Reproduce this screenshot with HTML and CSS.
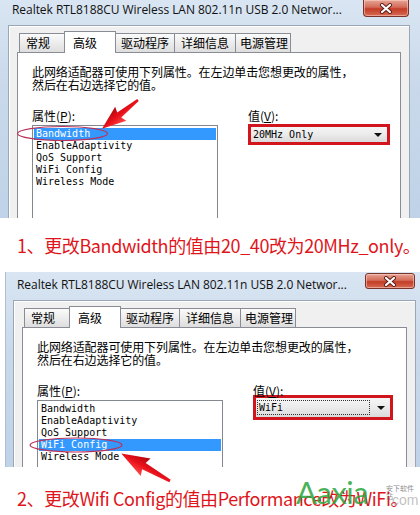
FILE: index.html
```html
<!DOCTYPE html>
<html lang="zh-CN">
<head>
<meta charset="utf-8">
<title>更改无线网卡属性</title>
<link rel="stylesheet" href="styles.css">
</head>
<body>
<div class="page">
  <section class="shot shot--one">
    <div class="titlebar">
      <span class="title">Realtek RTL8188CU Wireless LAN 802.11n USB 2.0 Networ...</span>
      <span class="close"><svg width="14" height="11" viewBox="0 0 14 11"><path d="M3 2 L11 9 M11 2 L3 9" stroke="#5a1a14" stroke-width="4" stroke-linecap="round"/><path d="M3 2 L11 9 M11 2 L3 9" stroke="#fff" stroke-width="2.2" stroke-linecap="round"/></svg></span>
    </div>
    <div class="dialog">
      <div class="tabs">
        <span class="tab tab--general">常规</span>
        <span class="tab tab--active">高级</span>
        <span class="tab tab--driver">驱动程序</span>
        <span class="tab tab--detail">详细信息</span>
        <span class="tab tab--power">电源管理</span>
      </div>
      <div class="panel">
        <p class="desc">此网络适配器可使用下列属性。在左边单击您想更改的属性，<br>然后在右边选择它的值。</p>
        <div class="props">
          <div class="col col--left">
            <div class="label">属性(<u>P</u>):</div>
            <ul class="list">
              <li class="item item--sel">Bandwidth</li>
              <li class="item">EnableAdaptivity</li>
              <li class="item">QoS Support</li>
              <li class="item">WiFi Config</li>
              <li class="item">Wireless Mode</li>
            </ul>
          </div>
          <div class="col col--right">
            <div class="label">值(<u>V</u>):</div>
            <div class="mark">
              <div class="combo"><span class="combo-text">20MHz Only</span><span class="combo-arrow"></span></div>
            </div>
          </div>
        </div>
      </div>
    </div>
  </section>

  <p class="caption caption--one">1、更改Bandwidth的值由20_40改为20MHz_only。</p>

  <section class="shot shot--two">
    <div class="titlebar">
      <span class="title">Realtek RTL8188CU Wireless LAN 802.11n USB 2.0 Networ...</span>
      <span class="close"><svg width="14" height="11" viewBox="0 0 14 11"><path d="M3 2 L11 9 M11 2 L3 9" stroke="#5a1a14" stroke-width="4" stroke-linecap="round"/><path d="M3 2 L11 9 M11 2 L3 9" stroke="#fff" stroke-width="2.2" stroke-linecap="round"/></svg></span>
    </div>
    <div class="dialog">
      <div class="tabs">
        <span class="tab tab--general">常规</span>
        <span class="tab tab--active">高级</span>
        <span class="tab tab--driver">驱动程序</span>
        <span class="tab tab--detail">详细信息</span>
        <span class="tab tab--power">电源管理</span>
      </div>
      <div class="panel">
        <p class="desc">此网络适配器可使用下列属性。在左边单击您想更改的属性，<br>然后在右边选择它的值。</p>
        <div class="props">
          <div class="col col--left">
            <div class="label">属性(<u>P</u>):</div>
            <ul class="list">
              <li class="item">Bandwidth</li>
              <li class="item">EnableAdaptivity</li>
              <li class="item">QoS Support</li>
              <li class="item item--sel">WiFi Config</li>
              <li class="item">Wireless Mode</li>
            </ul>
          </div>
          <div class="col col--right">
            <div class="label">值(<u>V</u>):</div>
            <div class="mark mark--tall">
              <div class="combo"><span class="combo-text combo-text--focus">WiFi</span><span class="combo-arrow"></span></div>
            </div>
          </div>
        </div>
      </div>
    </div>
  </section>

  <p class="caption caption--two">2、更改Wifi Config的值由Performance改为WiFi。</p>

  <div class="watermark">
    <span class="wm-logo">Aaxia</span>
    <span class="wm-site">安下软件站</span>
    <span class="wm-com">com</span>
  </div>

  <svg class="overlay" width="420" height="515" viewBox="0 0 420 515">
    <defs>
      <linearGradient id="arr" x1="0" y1="0" x2="0" y2="1">
        <stop offset="0" stop-color="#ff4a4a"/>
        <stop offset="0.5" stop-color="#e8101a"/>
        <stop offset="1" stop-color="#b0060c"/>
      </linearGradient>
    </defs>
    <ellipse cx="62.5" cy="133.5" rx="45" ry="7" fill="none" stroke="#b8325a" stroke-width="1.2"/>
    <g transform="translate(138 100) rotate(141.5)">
      <path d="M0 -1.2 L24 -3.2 L22 -9 L46 0 L22 9 L24 3.2 L0 1.2 Z" fill="url(#arr)"/>
    </g>
    <ellipse cx="76" cy="445" rx="46" ry="7" fill="none" stroke="#b8325a" stroke-width="1.2"/>
    <g transform="translate(170 481) rotate(209.5)">
      <path d="M0 -1.4 L30 -3.6 L28 -10 L56 0 L28 10 L30 3.6 L0 1.4 Z" fill="url(#arr)"/>
    </g>
  </svg>
</div>
</body>
</html>
```
FILE: styles.css
```css
body {
  margin: 0;
  background: #ffffff;
}

.page {
  position: relative;
  width: 420px;
  height: 515px;
  overflow: hidden;
  background: #ffffff;
}

/* ---------- window screenshot ---------- */
.shot {
  display: flex;
  flex-direction: column;
  overflow: hidden;
  background: linear-gradient(to bottom, #d9e5f2 0%, #c9d9eb 40%, #bfd2e7 100%);
  box-sizing: border-box;
}

.shot--one {
  width: 420px;
  height: 218px;
}

.shot--two {
  width: 415px;
  height: 195px;
  margin-left: 5px;
  border-left: 1px solid #aebfd3;
}

.titlebar {
  display: flex;
  align-items: flex-start;
  height: 25px;
  flex: none;
  padding-left: 12px;
  box-sizing: border-box;
}

.shot--two .titlebar {
  height: 28px;
  padding-left: 11px;
}

.title {
  font-family: "Open Sans", "Noto Sans", sans-serif;
  font-size: 12px;
  line-height: 16px;
  color: #111;
  padding-top: 2px;
  white-space: nowrap;
  letter-spacing: -0.05px;
}

.shot--two .title {
  padding-top: 5px;
}

.close {
  margin-left: auto;
  margin-right: 11px;
  width: 46px;
  height: 17px;
  box-sizing: border-box;
  display: flex;
  align-items: center;
  justify-content: center;
  background: linear-gradient(to bottom, #e6a597 0%, #d46b58 45%, #c23d27 55%, #d86a52 100%);
  border: 1px solid #7a3328;
  border-top: none;
  border-radius: 0 0 4px 4px;
  box-shadow: inset 0 0 0 1px rgba(255, 220, 210, 0.5);
}

.shot--two .close {
  margin-top: 1px;
  margin-right: 5px;
  width: 50px;
  height: 16px;
  border-top: 1px solid #7a3328;
  border-radius: 3px;
}

.dialog {
  flex: 1;
  display: flex;
  flex-direction: column;
  margin: 0 10px 0 8px;
  border: 1px solid #9aa6b4;
  border-bottom: none;
  background: #f0f0f0;
  box-shadow: inset 1px 1px 0 #ffffff;
  padding-top: 5px;
}

.shot--two .dialog {
  margin: 0 4px 0 7px;
}

/* ---------- tabs ---------- */
.tabs {
  display: flex;
  align-items: flex-end;
  height: 21px;
  margin-left: 10px;
  flex: none;
}

.tab {
  height: 19px;
  box-sizing: border-box;
  display: flex;
  align-items: center;
  padding: 0 5px;
  border: 1px solid #898c95;
  border-bottom: none;
  margin-right: -1px;
  background: linear-gradient(to bottom, #fbfbfb 0%, #ececec 50%, #dedede 100%);
  font-family: "Noto Sans CJK SC", sans-serif;
  font-size: 12px;
  line-height: 14px;
  color: #000;
  white-space: nowrap;
}

.tab--general {
  width: 46px;
  padding-left: 6px;
}

.tab--active {
  height: 21px;
  width: 52px;
  padding-left: 8px;
  background: #ffffff;
  position: relative;
  z-index: 1;
  margin-bottom: -1px;
  height: 22px;
}

.tab--driver {
  width: 60px;
  padding-left: 5px;
}

.tab--detail {
  width: 62px;
  padding-left: 6px;
}

.tab--power {
  width: 56px;
  padding-left: 4px;
}

/* ---------- panel ---------- */
.panel {
  flex: 1;
  margin: 0 8px;
  border: 1px solid #898c95;
  border-bottom: none;
  background: #ffffff;
  padding: 12px 0 0 14px;
}

.desc {
  margin: 0;
  font-family: "Noto Sans CJK SC", sans-serif;
  font-size: 12px;
  line-height: 13px;
  color: #000;
  white-space: nowrap;
  letter-spacing: -0.1px;
}

.props {
  display: flex;
  gap: 30px;
  margin-top: 18px;
}

.col--left {
  width: 186px;
}

.col--right {
  width: 142px;
}

.label {
  font-family: "Noto Sans CJK SC", sans-serif;
  font-size: 12px;
  line-height: 14px;
  color: #000;
}

.label u {
  text-decoration: underline;
}

.list {
  list-style: none;
  margin: 2px 0 0 0;
  padding: 2px 1px;
  height: 120px;
  border: 1px solid #828790;
  background: #fff;
}

.item {
  height: 12px;
  line-height: 12px;
  padding-left: 2px;
  font-family: "DejaVu Sans Mono", "Liberation Mono", monospace;
  font-size: 10px;
  color: #000;
  white-space: pre;
}

.item--sel {
  background: #3399ff;
  color: #ffffff;
}

/* ---------- value dropdown ---------- */
.mark {
  margin-top: 1px;
  width: 142px;
  height: 21px;
  box-sizing: border-box;
  border: 3px solid #d2141c;
  display: flex;
}

.mark--tall {
  margin-top: -3px;
  height: 25px;
  width: 140px;
  border-width: 3px;
}

.combo {
  flex: 1;
  display: flex;
  align-items: center;
  padding: 0 5px 0 2px;
  background: linear-gradient(to bottom, #f6f6f6 0%, #ebebeb 50%, #dadada 100%);
}

.combo-text {
  font-family: "DejaVu Sans Mono", "Liberation Mono", monospace;
  font-size: 10px;
  line-height: 12px;
  color: #000;
  white-space: pre;
}

.combo-text--focus {
  flex: 1;
  margin-right: 8px;
  padding-left: 1px;
  outline: 1px dotted #333;
  outline-offset: 0;
  line-height: 13px;
}

.combo-arrow {
  margin-left: auto;
  width: 0;
  height: 0;
  border-left: 4px solid transparent;
  border-right: 4px solid transparent;
  border-top: 4px solid #111;
}

/* ---------- captions ---------- */
.caption {
  margin: 0;
  padding-left: 17px;
  font-family: "Noto Sans CJK SC", sans-serif;
  font-size: 18px;
  color: #e0151b;
  white-space: nowrap;
  letter-spacing: -0.4px;
}

.caption--one {
  height: 54px;
  line-height: 54px;
}

.caption--two {
  padding-top: 14px;
  line-height: 34px;
}

/* ---------- watermark ---------- */
.watermark {
  position: absolute;
  left: 296px;
  top: 474px;
  width: 124px;
  height: 40px;
}

.wm-logo {
  position: absolute;
  left: 0;
  top: 0;
  font-family: "Lato", "Liberation Sans", sans-serif;
  font-size: 31px;
  line-height: 36px;
  color: rgba(40, 165, 60, 0.85);
  letter-spacing: -0.5px;
}

.wm-site {
  position: absolute;
  left: 90px;
  top: 10px;
  font-family: "Noto Sans CJK SC", sans-serif;
  font-size: 7px;
  line-height: 8px;
  color: rgba(110, 110, 110, 0.8);
}

.wm-com {
  position: absolute;
  left: 96px;
  top: 18px;
  font-family: "Liberation Sans", sans-serif;
  font-size: 14px;
  line-height: 16px;
  color: rgba(150, 150, 150, 0.6);
}

.overlay {
  position: absolute;
  left: 0;
  top: 0;
  pointer-events: none;
}
```
